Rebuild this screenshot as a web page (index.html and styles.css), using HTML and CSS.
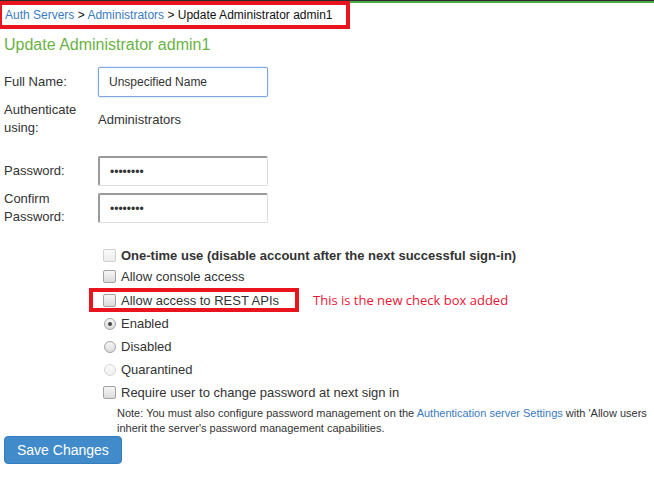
FILE: index.html
```html
<!DOCTYPE html>
<html lang="en">
<head>
  <meta charset="UTF-8" />
  <title>Update Administrator admin1</title>
  <link rel="stylesheet" href="styles.css">
</head>
<body>
  <div class="topbar"></div>

  <div class="crumbs">
    <a href="#">Auth Servers</a> &gt; <a href="#">Administrators</a> &gt; Update Administrator admin1
  </div>

  <h1 class="title">Update Administrator admin1</h1>

  <form class="admin-form">
    <div class="row">
      <label class="row-label">Full Name:</label>
      <input type="text" class="field focused" value="Unspecified Name">
    </div>
    <div class="row row-auth">
      <span class="row-label">Authenticate<br>using:</span>
      <span class="row-value">Administrators</span>
    </div>
    <div class="row row-pass">
      <label class="row-label">Password:</label>
      <input type="password" class="field" value="abcdefgh">
    </div>
    <div class="row">
      <label class="row-label">Confirm<br>Password:</label>
      <input type="password" class="field" value="abcdefgh">
    </div>

    <div class="options">
      <label class="opt first">
        <input type="checkbox" class="box" disabled>
        <b>One-time use (disable account after the next successful sign-in)</b>
      </label>
      <label class="opt">
        <input type="checkbox" class="box">
        Allow console access
      </label>
      <div class="opt-line">
        <label class="opt marked">
          <input type="checkbox" class="box">
          Allow access to REST APIs
        </label>
        <span class="annotation">This is the new check box added</span>
      </div>
      <label class="opt">
        <input type="radio" name="status" class="dot" checked>
        Enabled
      </label>
      <label class="opt">
        <input type="radio" name="status" class="dot">
        Disabled
      </label>
      <label class="opt">
        <input type="radio" name="status" class="dot" disabled>
        Quarantined
      </label>
      <label class="opt">
        <input type="checkbox" class="box">
        Require user to change password at next sign in
      </label>
      <p class="note">
        Note: You must also configure password management on the <a href="#">Authentication server Settings</a> with 'Allow users<br>
        inherit the server's password management capabilities.
      </p>
    </div>

    <button type="submit" class="save">Save Changes</button>
  </form>
</body>
</html>
```

FILE: styles.css
```css
* {
  box-sizing: border-box;
}

body {
  margin: 0;
  background: #ffffff;
  color: #333;
  font-family: "Liberation Sans", Arial, sans-serif;
  font-size: 13px;
  overflow: hidden;
}

a {
  color: #3a7bc0;
  text-decoration: none;
}

.topbar {
  height: 3px;
  border-top: 1px solid #2b2b2b;
  background: #4fa845;
}

.crumbs {
  display: inline-block;
  margin-top: -2px;
  border: 4px solid #e8141e;
  border-left-width: 2px;
  padding: 0 13px 0 3px;
  font-size: 12px;
  line-height: 20px;
  color: #111;
  white-space: nowrap;
}

.title {
  margin: 6px 0 12px 4px;
  font-size: 16px;
  line-height: 20px;
  font-weight: normal;
  color: #6ab344;
}

.admin-form {
  margin: 0;
}

.row {
  display: flex;
  align-items: center;
  margin-bottom: 4px;
  padding-left: 4px;
}

.row-label {
  width: 94px;
  line-height: 18px;
  color: #333;
}

.row-auth {
  margin-bottom: 19px;
}

.row-value {
  color: #333;
}

.field {
  width: 170px;
  height: 30px;
  padding: 0 10px;
  font-family: "Liberation Sans", Arial, sans-serif;
  font-size: 12px;
  color: #333;
  border: 1px solid #dedede;
  border-top: 2px solid #9a9a9a;
  border-left: 2px solid #9a9a9a;
  border-radius: 2px;
  outline: none;
}

.field.focused {
  border: 1px solid #7fa6de;
  box-shadow: 0 0 2px #a9c6ef;
}

.options {
  margin-top: 19px;
  padding-left: 89px;
}

.opt {
  display: flex;
  align-items: center;
  height: 23px;
  padding-left: 14px;
  color: #333;
}

.opt.first {
  height: 20px;
}

.opt b {
  color: #333;
}

.opt-line {
  display: flex;
  align-items: center;
}

.opt.marked {
  width: 210px;
  height: 24px;
  border: 4px solid #e8141e;
  padding-left: 10px;
}

.annotation {
  margin-left: 14px;
  font-family: "Open Sans", sans-serif;
  font-size: 13px;
  color: #ea1535;
}

.box,
.dot {
  appearance: none;
  -webkit-appearance: none;
  margin: 0 5px 0 0;
  width: 13px;
  height: 13px;
  border: 1px solid #a3a3a3;
  background: linear-gradient(#f7f7f7, #dadada);
  flex: none;
}

.box {
  border-radius: 2px;
}

.box:disabled {
  border-color: #cfcfcf;
  background: linear-gradient(#fafafa, #ececec);
}

.dot {
  width: 12px;
  height: 12px;
  margin-left: 1px;
  margin-right: 5px;
  border-radius: 50%;
  position: relative;
}

.dot:checked::after {
  content: "";
  position: absolute;
  top: 3px;
  left: 3px;
  width: 4px;
  height: 4px;
  border-radius: 50%;
  background: #444;
}

.dot:disabled {
  border-color: #d6d6d6;
  background: linear-gradient(#fbfbfb, #efefef);
}

.note {
  margin: 2px 0 0 28px;
  font-size: 11px;
  line-height: 15px;
  color: #333;
  white-space: nowrap;
}

.save {
  margin: 0 0 0 4px;
  height: 28px;
  padding: 0 12px;
  background: #428bca;
  border: 1px solid #357ebd;
  border-radius: 4px;
  color: #fff;
  font-family: "Liberation Sans", Arial, sans-serif;
  font-size: 14px;
  cursor: pointer;
}
```
